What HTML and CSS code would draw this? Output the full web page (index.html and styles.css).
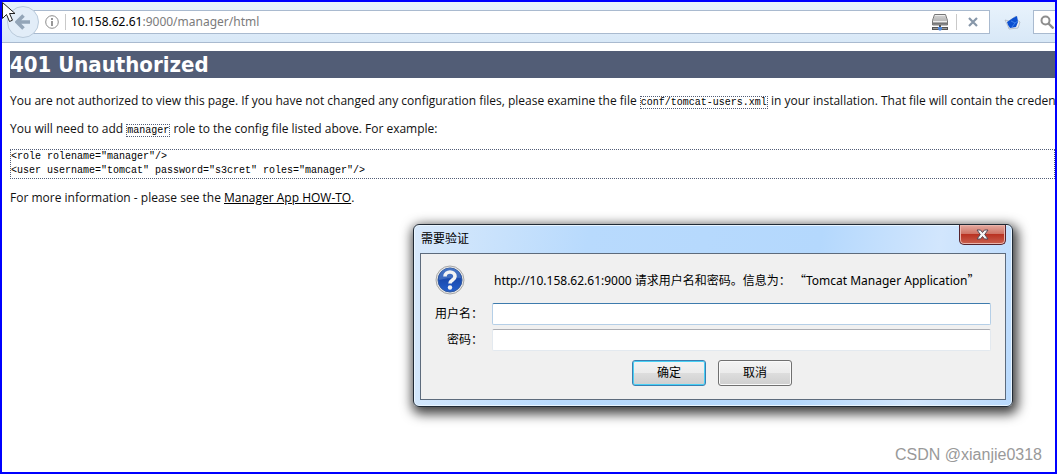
FILE: index.html
```html
<!DOCTYPE html>
<html lang="zh-CN">
<head>
<meta charset="utf-8">
<title>401 Unauthorized</title>
<link rel="stylesheet" href="styles.css">
</head>
<body>
<div class="browser">
  <header class="toolbar">
    <button class="back" type="button" aria-label="Back">
      <svg width="16" height="16" viewBox="0 0 16 16"><path d="M8.5 1.5 2 8l6.500 6.500M2.500 8H15" fill="none" stroke="#93a5b8" stroke-width="3.600"/></svg>
    </button>
    <div class="address">
      <svg class="info" width="14" height="14" viewBox="0 0 14 14"><circle cx="7" cy="7" r="6.300" fill="none" stroke="#8c8c8c"/><path d="M7 3v2M7 6v5" stroke="#8c8c8c" stroke-width="1.800"/></svg>
      <span class="divider"></span>
      <div class="url"><b>10.158.62.61</b>:9000/manager/html</div>
      <svg class="drive" width="18" height="17" viewBox="0 0 18 17">
        <defs><linearGradient id="metal" x2="0" y2="1"><stop stop-color="#f4f4f4"/><stop offset="1" stop-color="#929292"/></linearGradient></defs>
        <path d="M3.500.5h11l2 6v4.500h-15V6.500z" fill="url(#metal)" stroke="#777"/>
        <path d="M3 3h12M2.500 5h13" stroke="#b5b5b5"/><path d="M2 7.500h14" stroke="#eee"/><path d="M2 9.500h14" stroke="#777"/>
        <path d="M1 14.500h16" stroke="#555" stroke-width="3"/><path d="M2 14.500h14" stroke="#999"/><path d="M9 11v2" stroke="#555" stroke-width="2"/><path d="M7 13h4v2l-1 1.500H8L7 15z" fill="#4b86dc"/>
      </svg>
      <span class="divider short"></span>
      <button class="stop" type="button" aria-label="Stop"><svg width="10" height="10" viewBox="0 0 10 10"><path d="m1 1 8 8M9 1 1 9" stroke="#8797a9" stroke-width="2.200"/></svg></button>
    </div>
    <button class="addon" type="button" aria-label="Add-on">
      <svg width="17" height="15" viewBox="0 0 17 15"><path d="m1 5 4 1 7-5 1 4 3 2-2 6-9 1-1-3z" fill="#eef1f5" stroke="#a3acb7" stroke-width=".7"/><path d="m3 7 6-4 4-2 1 6-2 5-6 1-2-3z" fill="#0c50d0"/><path d="m7 6 4 2 3-2M11 8l-3 4" fill="none" stroke="#4b8cf0" stroke-width=".8"/></svg>
    </button>
    <div class="search"><svg width="14" height="14" viewBox="0 0 14 14"><circle cx="5.500" cy="5.500" r="4" fill="none" stroke="#8e8e8e" stroke-width="2"/><path d="m8.500 8.500 5 5" stroke="#8e8e8e" stroke-width="2.400"/></svg></div>
  </header>

  <main class="page">
    <h1>401 Unauthorized</h1>
    <p>You are not authorized to view this page. If you have not changed any configuration files, please examine the file <code>conf/tomcat-users.xml</code> in your installation. That file will contain the credent</p>
    <p>You will need to add <code>manager</code> role to the config file listed above. For example:</p>
    <pre>&lt;role rolename="manager"/&gt;
&lt;user username="tomcat" password="s3cret" roles="manager"/&gt;</pre>
    <p>For more information - please see the <a href="#howto">Manager App HOW-TO</a>.</p>
  </main>

  <form class="dialog" role="dialog" aria-labelledby="dialog-title">
    <div class="titlebar">
      <span id="dialog-title">需要验证</span>
      <button class="close" type="button" aria-label="关闭"><svg width="13" height="11" viewBox="0 0 13 11"><path d="M1 1h3.500l2 2.500L8.500 1H12L8.700 5.500 12 10H8.500l-2-2.500-2 2.500H1l3.300-4.500z" fill="#f6f6f6" stroke="#554b57"/></svg></button>
    </div>
    <div class="panel">
      <svg class="question" width="30" height="30" viewBox="0 0 30 30">
        <defs><linearGradient id="blue" x2="0" y2="1"><stop stop-color="#2c62bd"/><stop offset=".5" stop-color="#1b4baf"/><stop offset="1" stop-color="#2460ce"/></linearGradient></defs>
        <circle cx="15" cy="15" r="14" fill="#e4e4e4" stroke="#a8a8a8"/><circle cx="15" cy="15" r="12" fill="url(#blue)" stroke="#3159a0"/>
        <path d="M4 15a11 11 0 0 1 22-2Q15 12 4 15z" fill="#5d86cc" opacity=".5"/>
        <path d="M10 11.500c0-6 10-6 10 0 0 3.500-5 3.500-5 7" fill="none" stroke="#f4f4f4" stroke-width="3.600"/><circle cx="15" cy="22.500" r="2.200" fill="#f4f4f4"/>
      </svg>
      <p class="message">http://10.158.62.61:9000 请求用户名和密码。信息为： <span class="quote">“</span>Tomcat Manager Application<span class="quote">”</span></p>
      <label for="user">用户名：</label><input class="active" id="user" type="text">
      <label for="pass">密码：</label><input id="pass" type="password">
      <div class="actions"><button class="default" type="submit">确定</button><button type="button">取消</button></div>
    </div>
  </form>
  <div class="watermark">CSDN @xianjie0318</div>
  <svg class="pointer" width="14" height="21" viewBox="0 0 14 21"><path d="M.5.500v16l4-4 3 7 3-1.300-3-6.700H13z" fill="#fff" stroke="#222"/></svg>
</div>
</body>
</html>
```
FILE: styles.css
```css
* { box-sizing: border-box; }
body {
  margin: 0;
  font: 12px/16px "Noto Sans", "Noto Sans CJK SC", sans-serif;
  color: #000;
}
button { padding: 0; border: 0; background: none; font: inherit; color: inherit; }
svg { display: block; flex: none; }
.browser {
  position: relative;
  min-height: 100vh;
  border: 2px solid #00f;
  overflow: hidden;
  background: #fff;
}
.toolbar {
  display: flex;
  align-items: center;
  height: 41px;
  padding-left: 5px;
  border-bottom: 1px solid #a9bacf;
  background: linear-gradient(#e9f3fc, #d8e8f7);
}
.back {
  display: grid;
  place-items: center;
  flex: none;
  width: 32px;
  height: 32px;
  border: 1px solid #b9cadb;
  border-radius: 50%;
  background: #e2edf8;
  z-index: 1;
}
.address {
  display: flex;
  align-items: center;
  flex: 1;
  height: 24px;
  margin-left: -8px;
  padding-left: 13px;
  border: 1px solid #a9bacf;
  background: #fff;
}
.divider { width: 1px; height: 16px; margin: 0 5px 0 6px; background: #c9c9c9; }
.short { margin: 0 11px 0 8px; }
.url { flex: 1; color: #7b7b7b; }
.url b { font-weight: 400; color: #000; }
.drive { margin-right: -1px; }
.stop { margin-right: 11px; }
.addon { margin: 0 12px 0 14px; }
.search {
  flex: none;
  width: 22px;
  height: 24px;
  padding: 4px 0 0 6px;
  border: 1px solid #a9bacf;
  border-right: 0;
  background: #fff;
  overflow: hidden;
}
.page { padding: 8px 0 0 8px; white-space: nowrap; font-family: "Open Sans", sans-serif; }
h1 {
  margin: 0 0 15px;
  font-family: "DejaVu Sans Condensed", sans-serif;
  font-size: 22px;
  line-height: 27px;
  color: #fff;
  background: #525d76;
}
.page p { margin: 0 0 11px; color: #111; }
code, pre { font: 10px/14px "Liberation Mono", monospace; color: #000; border: 1px dotted #525d76; }
pre { margin: 0 0 11px; }
.page a { color: #000; }
.dialog {
  position: absolute;
  top: 222px;
  left: 411px;
  width: 600px;
  padding: 0 6px 6px;
  border: 1px solid #202a35;
  border-radius: 6px;
  background: linear-gradient(100deg, #d8e9fb 0, #b8dafd 28%, #b4d8fd 65%, #d2e6fd 84%, #b9dafd);
  box-shadow: inset 0 0 0 1px #e9f5ff, 2px 4px 12px 3px rgba(0, 0, 0, .75);
}
.titlebar { display: flex; justify-content: space-between; height: 28px; padding: 6px 0 0 1px; }
.close {
  display: grid;
  place-items: center;
  width: 47px;
  height: 20px;
  margin-top: -6px;
  border: 1px solid #56232c;
  border-top: 0;
  border-radius: 0 0 5px 5px;
  background: linear-gradient(#e5aaa0, #cf7466 45%, #b93222 50%, #c9604f);
  box-shadow: inset 0 0 0 1px #e9b5ad;
}
.panel {
  display: grid;
  grid-template-columns: 62px 1fr;
  column-gap: 9px;
  row-gap: 4px;
  align-items: center;
  padding: 11px 14px 13px 0;
  border: 1px solid #5d6b7c;
  background: #f0f0f0;
}
.question { justify-self: start; margin-left: 14px; }
.message { margin: 0 0 0 2px; white-space: nowrap; }
.quote { font-family: "Noto Sans CJK SC", sans-serif; }
.panel label { text-align: right; white-space: nowrap; }
.question, .message { margin-bottom: 4px; }
input {
  width: 100%;
  height: 22px;
  padding: 0 4px;
  border: 1px solid #e3e9ef;
  border-top-color: #abadb3;
  border-radius: 2px;
  background: #fff;
  font: inherit;
  outline: 0;
}
.active { border-color: #b5cfe7; border-top-color: #3d7bad; }
.actions {
  grid-column: 1 / -1;
  display: flex;
  justify-content: center;
  gap: 12px;
  padding: 5px 0 0 12px;
}
.actions button {
  width: 74px;
  height: 26px;
  border: 1px solid #707070;
  border-radius: 3px;
  background: linear-gradient(#f3f3f3, #ebebeb 49%, #ddd 50%, #cfcfcf);
  box-shadow: inset 0 0 0 1px #fafafa;
}
.actions .default { border-color: #3c7fb1; box-shadow: inset 0 0 0 1px #48d0f5; }
.watermark {
  position: absolute;
  right: 13px;
  bottom: 7px;
  font: 16px/20px "Liberation Sans", Arial, sans-serif;
  color: #999;
}
.pointer { position: absolute; top: 0; left: 0; z-index: 2; }
```
